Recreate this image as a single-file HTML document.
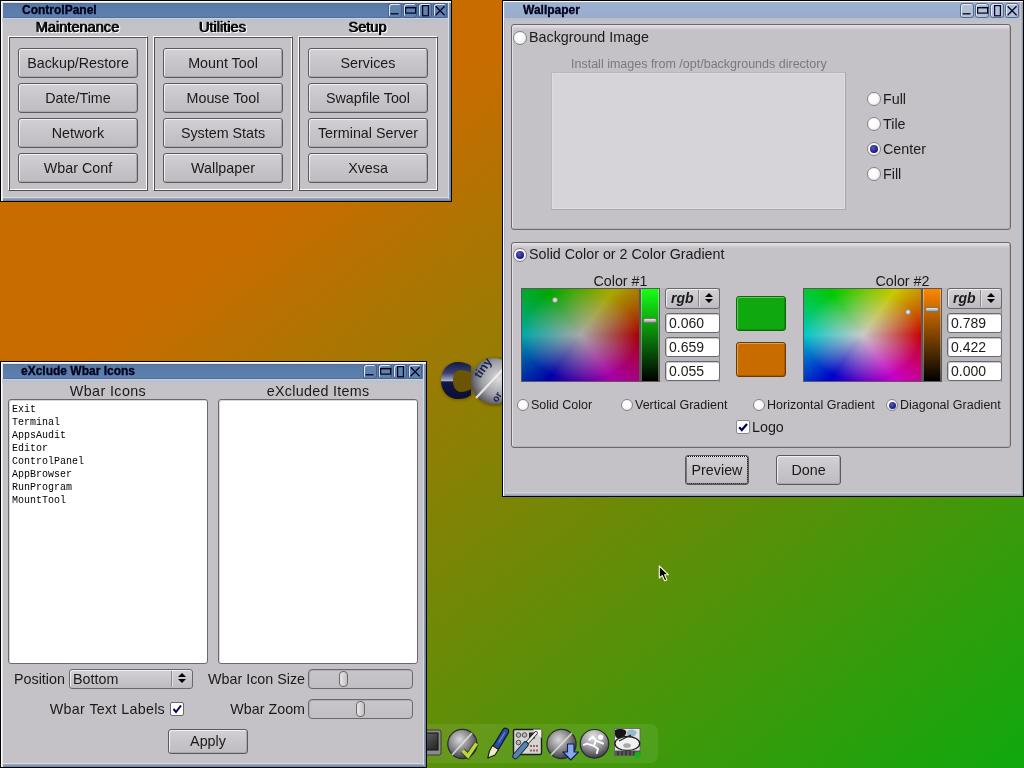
<!DOCTYPE html>
<html><head><meta charset="utf-8">
<style>
*{box-sizing:border-box}
html,body{margin:0;padding:0}
body{will-change:transform}
body{width:1024px;height:768px;overflow:hidden;position:relative;font-family:"Liberation Sans",sans-serif;font-size:14px;color:#1a1a1a;
background:linear-gradient(to bottom right,#c96c00 0%,#c96c00 27.27%,#0fa80e 100%);}
.a{position:absolute}
.win{position:absolute;background:#c4c2c6;border:1px solid #000;
box-shadow:inset 1px 1px 0 #fbfbfd,inset 2px 2px 0 #e2e4e8,inset -1px 0 0 #76869e,inset 0 -1px 0 #76869e,inset -2px 0 0 #8898b2,inset 0 -2px 0 #8898b2,inset -3px 0 0 #d2dae4,inset 0 -3px 0 #98a6bc,inset 0 -4px 0 #d2dae4;}
.win.in{box-shadow:inset 1px 1px 0 #fbfbfd,inset 2px 2px 0 #a8b4c8,inset -1px 0 0 #9a9ca8,inset 0 -1px 0 #9a9ca8,inset -2px 0 0 #aeb0bc,inset 0 -2px 0 #aeb0bc,inset -3px 0 0 #c4c8d4,inset 0 -3px 0 #bcbec8,inset 0 -4px 0 #cdd0da;}
.tb{position:absolute;height:15px;background:linear-gradient(#5878a2,#5a7eac 50%,#5b80b0);box-shadow:inset 0 1px 0 #587090,inset 0 -1px 0 #5a6c98,0 1px 0 #c4d0dc;
font-weight:bold;font-size:12px;color:#00001c;line-height:15px;white-space:nowrap}
.tb.in{background:linear-gradient(#9cb0d0,#9aaed0 60%,#9caccc);box-shadow:inset 0 -1px 0 #a0a8c4,0 1px 0 #b8c0cc}
.tb span{position:absolute;top:0;-webkit-text-stroke:.3px #00001c}
.tbb{position:absolute;width:14px;height:15px;border-radius:3px;background:#6082ae;border:1px solid #4a5e80;box-shadow:inset 1px 1px 0 #dde8f8}
.tbb svg{position:absolute;left:-1px;top:-1px}
.tbb.in{background:#b2c0d6;border-color:#56688a;box-shadow:inset 1px 1px 0 #e4ecf6}
.btn{position:absolute;border:1px solid #5a5a5c;border-radius:3px;background:linear-gradient(#d2d0d4 0,#c8c6ca 45%,#bebcc0 100%);
box-shadow:inset 1px 1px 0 #f0f0f2,inset -1px -1px 0 #aaa8ac;text-align:center;white-space:nowrap;font-size:14.3px}
.emb{position:absolute;border-top:1px solid #fff;border-left:1px solid #fff;border-right:1px solid #505050;border-bottom:1px solid #505050;
box-shadow:inset 1px 1px 0 #505050,inset -1px -1px 0 #fff}
.glbl{position:absolute;text-align:center;line-height:18px;height:18px;font-size:14.6px;color:#000;text-shadow:-1px 0 rgba(0,0,0,.9),-1px -1px rgba(0,0,0,.25),1px 1px #fff,1px 0 rgba(255,255,255,.6)}
.t{position:absolute;white-space:nowrap;line-height:1;font-size:14.3px}
.gfr{position:absolute;border:1px solid #6a686c;border-radius:3px;background:linear-gradient(#e8e4ea,#c4c2c6 5px);box-shadow:inset 1px 1px 0 #e2e0e4,inset -1px -1px 0 #b6b4b8}
.rad{position:absolute;border-radius:50%;border:1px solid #858387;background:radial-gradient(circle at 40% 40%,#fff 0,#fafafa 50%,#d8d8d8 100%)}
.dot{position:absolute;border-radius:50%;background:radial-gradient(circle at 40% 35%,#5858c0,#14147a 75%)}
.imgbox{position:absolute;background:#d6d4d8;border:1px solid #a8a6aa;border-top-color:#b8b6ba;border-left-color:#b8b6ba;box-shadow:inset 1px 1px 0 #dedce0,inset -1px -1px 0 #e0dee2}
.huebox{position:absolute;border:1px solid #5a585c;overflow:hidden}
.hueinner{position:absolute;left:0;top:0;width:92px;height:92px;transform-origin:0 0}
.huemark{position:absolute;width:6px;height:6px;margin:-3px 0 0 -3px;border-radius:50%;background:#ddd;border:1px solid #888}
.valbox{position:absolute;border:1px solid #5a585c;box-shadow:inset 1px 0 0 rgba(255,255,255,.35),inset -1px 0 0 rgba(255,255,255,.35)}
.valknob{position:absolute;left:2px;width:14px;height:5px;margin-top:-2px;border-radius:2px;background:linear-gradient(#e8e8e8,#a0a0a0);border:1px solid #777}
.cpanel{position:absolute;background:#b9b7bb;border-right:1px solid #8a888c}
.choice{position:absolute;border:1px solid #6a686c;border-radius:3px;background:linear-gradient(#d4d2d6,#bdbbbf);box-shadow:inset 1px 1px 0 #eee}
.rgb{position:absolute;left:5px;top:2px;font-weight:bold;font-style:italic;font-size:14px;line-height:1}
.csep{position:absolute;left:32px;top:1px;width:1px;height:17px;background:#8a888c;box-shadow:1px 0 0 #e0e0e0}
.arr{position:absolute;left:39px;top:4px;width:0;height:0;border-left:4px solid transparent;border-right:4px solid transparent;border-bottom:4px solid #000}
.arr:after{content:"";position:absolute;left:-4px;top:6px;border-left:4px solid transparent;border-right:4px solid transparent;border-top:4px solid #000}
.inp{position:absolute;background:#fff;border:1px solid #6a686c;border-radius:3px;box-shadow:inset 1px 1px 0 #ccc;font-size:14px;line-height:18px;padding-left:3px}
.sw{position:absolute;border:1px solid;border-radius:3px;box-shadow:inset 1px 1px 0 rgba(255,255,255,.35),inset -1px -1px 0 rgba(0,0,0,.15)}
.chk{position:absolute;background:#fff;border:1px solid #6a686c;border-radius:2px}
.pv{outline:1px dotted #000;outline-offset:-2px}
.lst{position:absolute;background:#fff;border:1px solid #6a686c;border-radius:3px;box-shadow:inset 1px 1px 0 #d8d8d8}
.mono{position:absolute;font-family:"Liberation Mono",monospace;font-size:11.6px;line-height:13px;white-space:nowrap;transform:scaleX(0.862);transform-origin:0 0;color:#000}
.sld{position:absolute;border:1px solid #6a686c;border-radius:4px;background:linear-gradient(#c8c6ca,#c0bec2);box-shadow:inset 1px 1px 0 #b0aeb2}
.knob{position:absolute;top:1px;width:9px;height:16px;border:1px solid #6a686c;border-radius:4px;background:linear-gradient(90deg,#e8e8e8,#c0c0c0);}
</style></head><body>
<svg class="a" style="left:436px;top:352px" width="70" height="60" viewBox="0 0 70 60">
<defs>
<radialGradient id="sph" cx="0.6" cy="0.45" r="0.62"><stop offset="0" stop-color="#dcdcde"/><stop offset="0.6" stop-color="#a0a0a6"/><stop offset="1" stop-color="#50505a"/></radialGradient>
<linearGradient id="cg" x1="0" y1="0" x2="0" y2="1"><stop offset="0" stop-color="#141a44"/><stop offset="0.3" stop-color="#3a4070"/><stop offset="0.5" stop-color="#a8acc4"/><stop offset="0.54" stop-color="#121846"/><stop offset="1" stop-color="#0a0e34"/></linearGradient>
<filter id="blr" x="-30%" y="-30%" width="160%" height="160%"><feGaussianBlur stdDeviation="1.5"/></filter>
</defs>
<g filter="url(#blr)" opacity="0.45"><path d="M36 15 C32 12 27 11 22 11 C12 11 5 19 5 29.5 C5 40 12 48 22 48 C27 48 31 47 36 44 Z" fill="#3a2800"/><circle cx="59" cy="30" r="24" fill="#3a2800"/></g>
<path d="M35 14 C31 11 27 10 22 10 C12 10 5 18 5 28.5 C5 39 12 47 22 47 C27 47 31 46 35 43 L35 37 C32 39 28 40 25 40 C20 40 17 35 17 28.5 C17 22 20 18 25 18 C28 18 32 19 35 21 Z" fill="url(#cg)"/>
<circle cx="58" cy="29" r="23" fill="url(#sph)"/>
<path d="M40 46 L70 14" stroke="#f4f4f4" stroke-width="2.2" opacity="0.85"/>
<text x="0" y="0" font-family="Liberation Sans" font-weight="bold" font-size="12" fill="#1a2050" transform="translate(44 27) rotate(-55)">tiny</text>
<text x="0" y="0" font-family="Liberation Sans" font-weight="bold" font-size="10" fill="#1a2050" transform="translate(61 51) rotate(-58)">or</text>
</svg>
<div class="a" style="left:405px;top:724px;width:253px;height:39px;border-radius:7px;background:rgba(255,255,255,0.08)"></div>
<svg class="a" style="left:405px;top:724px" width="253" height="40" viewBox="0 0 253 40">
<defs>
<radialGradient id="ball" cx="0.4" cy="0.35" r="0.7"><stop offset="0" stop-color="#d8d8d8"/><stop offset="0.5" stop-color="#8a8a8e"/><stop offset="1" stop-color="#34343a"/></radialGradient>
<radialGradient id="ball2" cx="0.45" cy="0.25" r="0.75"><stop offset="0" stop-color="#e4e4e4"/><stop offset="0.55" stop-color="#9a9aa0"/><stop offset="1" stop-color="#3a3a40"/></radialGradient>
<linearGradient id="scr" x1="0" y1="0" x2="1" y2="1"><stop offset="0" stop-color="#707070"/><stop offset="1" stop-color="#202020"/></linearGradient>
</defs>
<rect x="9" y="6" width="27" height="25" rx="2" fill="#8a8a8a" stroke="#3a3a3a"/>
<rect x="12" y="9" width="21" height="17" fill="url(#scr)" stroke="#111"/>
<circle cx="57.4" cy="20" r="14.6" fill="url(#ball)" stroke="#2c2c30" stroke-width="1.2"/>
<path d="M47 31 L67 9" stroke="#e8e8e8" stroke-width="1.8" opacity="0.8"/>
<path d="M57.5 26.5 L63 32 L71.5 19.5" stroke="#203000" stroke-width="5.5" fill="none" stroke-linejoin="miter" opacity="0.6"/>
<path d="M57.5 26.5 L63 32 L71.5 19.5" stroke="#b8d838" stroke-width="3.6" fill="none" stroke-linejoin="miter"/>
<path d="M100.5 7.5 L90.5 24" stroke="#0c1830" stroke-width="7.4" stroke-linecap="round"/>
<path d="M100.5 7.5 L90.5 24" stroke="#2e4ea6" stroke-width="5" stroke-linecap="round"/>
<path d="M99.5 9 L94 18" stroke="#6a8ad8" stroke-width="1.2" stroke-linecap="round"/>
<path d="M87.5 21.5 L93.5 25.5 L90 31 L82.8 34 L84.5 27 Z" fill="#eeecc8" stroke="#1c1c10" stroke-width="1.1" stroke-linejoin="round"/>
<rect x="108.5" y="5.5" width="28" height="25" rx="1.5" fill="#d4d4d2" stroke="#1e1e1e" stroke-width="1.4"/>
<path d="M128 5.5 L136.5 5.5 L136.5 14 Z" fill="#f4f4f4"/>
<circle cx="113.5" cy="11" r="2.3" fill="#b8b8b8" stroke="#505050"/><circle cx="119.5" cy="11" r="2.3" fill="#b8b8b8" stroke="#505050"/><circle cx="113.5" cy="18.5" r="2.3" fill="#b8b8b8" stroke="#505050"/>
<rect x="124" y="8.5" width="6" height="6" fill="#2a2a2a"/>
<path d="M126 21 v2 M129 21 v2 M132 21 v2 M126 25.5 v2 M129 25.5 v2 M132 25.5 v2" stroke="#8a4a40" stroke-width="1.6"/>
<path d="M131 9 L121 20" stroke="#202020" stroke-width="3.6" stroke-linecap="round"/>
<path d="M131 9 L121 20" stroke="#f2f2f2" stroke-width="2.2" stroke-linecap="round"/>
<path d="M120.5 20.5 L110.5 32" stroke="#1a2838" stroke-width="6.4" stroke-linecap="round"/>
<path d="M120.5 20.5 L110.5 32" stroke="#5a82b0" stroke-width="4.4" stroke-linecap="round"/>
<circle cx="156.5" cy="20" r="14.6" fill="url(#ball)" stroke="#2c2c30" stroke-width="1.2"/>
<path d="M146 31 L167 9" stroke="#e8e8e8" stroke-width="1.8" opacity="0.8"/>
<path d="M162.5 20 h6.5 v8 h4.5 l-7.75 8 l-7.75 -8 h4.5 z" fill="#88a8f0" stroke="#101c50" stroke-width="1.1" stroke-linejoin="round"/>
<circle cx="189.5" cy="19.8" r="14.3" fill="url(#ball2)" stroke="#2a2a2e" stroke-width="1.2"/>
<circle cx="195.7" cy="13.2" r="2.6" fill="#fff"/>
<path d="M184.4 15.7 L187.7 12.8 L191 16.5 L188.9 21.8 L181.8 19.6 L178.8 20.8 M191 16.5 L194.7 18.2 L198.2 19.6 M188.9 21.8 L193 25 L191.8 29.2" stroke="#fff" stroke-width="1.9" fill="none" stroke-linecap="round" stroke-linejoin="round"/>
<rect x="209.6" y="4.4" width="25.4" height="27" fill="#e4e4e4" stroke="#606060" stroke-width="0.8"/>
<path d="M210 6 C213 4.5 219 4.5 221 7 C222 10 219 14 214 14.5 C211 14.5 210 12 210 10 Z" fill="#151515"/>
<ellipse cx="226.5" cy="9" rx="5" ry="3.4" fill="#9ab8cc"/>
<ellipse cx="222.3" cy="19.5" rx="12.4" ry="7" fill="#f0f0f0" stroke="#1a1a1a" stroke-width="1.3"/>
<path d="M214 17 L226 11" stroke="#202020" stroke-width="1.2"/>
<ellipse cx="222" cy="21.5" rx="3.8" ry="2.3" fill="#a8a8a8"/>
<rect x="209.6" y="26.5" width="25.4" height="5" fill="#585858"/>
<path d="M213 27 v4.5 M217 27 v4.5 M221 27 v4.5 M225 27 v4.5 M229 27 v4.5" stroke="#2a2a2a" stroke-width="1.2"/>
<circle cx="232.5" cy="31" r="3.2" fill="#18b018"/>
</svg>
<div class="win" style="left:0px;top:0px;width:452px;height:202px"></div>
<div class="a" style="left:2px;top:18px;width:446px;height:6px;background:linear-gradient(rgba(176,192,214,.75),rgba(196,194,198,0))"></div>
<div class="tb" style="left:3px;top:3px;width:445px"><span style="left:19px">ControlPanel</span></div>
<div class="tbb" style="left:388px;top:3px"><svg width="15" height="16" viewBox="0 0 15 16"><g stroke="#000024" fill="none"><path d="M2.5 10.8 H10.5" stroke-width="1.3"/></g></svg></div>
<div class="tbb" style="left:403px;top:3px"><svg width="15" height="16" viewBox="0 0 15 16"><g stroke="#000024" fill="none"><rect x="2.6" y="4.6" width="10" height="5.5" stroke-width="1.2"/><path d="M2 4.6 H13.2" stroke-width="1.3"/></g></svg></div>
<div class="tbb" style="left:418px;top:3px"><svg width="15" height="16" viewBox="0 0 15 16"><g stroke="#000024" fill="none"><rect x="4.6" y="2.6" width="5.8" height="10.2" stroke-width="1.2"/></g></svg></div>
<div class="tbb" style="left:433px;top:3px"><svg width="15" height="16" viewBox="0 0 15 16"><g stroke="#000024" fill="none"><path d="M2.6 3.2 L11.6 12.2 M11.6 3.2 L2.6 12.2" stroke-width="1.25"/></g></svg></div>
<div class="glbl" style="left:8px;top:18px;width:140px">Maintenance</div>
<div class="glbl" style="left:153px;top:18px;width:140px">Utilities</div>
<div class="glbl" style="left:298px;top:18px;width:140px">Setup</div>
<div class="emb" style="left:8px;top:36px;width:140px;height:155px"></div>
<div class="emb" style="left:153px;top:36px;width:140px;height:155px"></div>
<div class="emb" style="left:298px;top:36px;width:140px;height:155px"></div>
<div class="btn" style="left:18px;top:48px;width:120px;height:30px;line-height:28px">Backup/Restore</div>
<div class="btn" style="left:18px;top:83px;width:120px;height:30px;line-height:28px">Date/Time</div>
<div class="btn" style="left:18px;top:118px;width:120px;height:30px;line-height:28px">Network</div>
<div class="btn" style="left:18px;top:153px;width:120px;height:30px;line-height:28px">Wbar Conf</div>
<div class="btn" style="left:163px;top:48px;width:120px;height:30px;line-height:28px">Mount Tool</div>
<div class="btn" style="left:163px;top:83px;width:120px;height:30px;line-height:28px">Mouse Tool</div>
<div class="btn" style="left:163px;top:118px;width:120px;height:30px;line-height:28px">System Stats</div>
<div class="btn" style="left:163px;top:153px;width:120px;height:30px;line-height:28px">Wallpaper</div>
<div class="btn" style="left:308px;top:48px;width:120px;height:30px;line-height:28px">Services</div>
<div class="btn" style="left:308px;top:83px;width:120px;height:30px;line-height:28px">Swapfile Tool</div>
<div class="btn" style="left:308px;top:118px;width:120px;height:30px;line-height:28px">Terminal Server</div>
<div class="btn" style="left:308px;top:153px;width:120px;height:30px;line-height:28px">Xvesa</div>
<div class="win in" style="left:502px;top:0px;width:522px;height:497px"></div>
<div class="a" style="left:504px;top:18px;width:516px;height:6px;background:linear-gradient(rgba(176,192,214,.75),rgba(196,194,198,0))"></div>
<div class="tb in" style="left:505px;top:3px;width:515px"><span style="left:18px">Wallpaper</span></div>
<div class="tbb in" style="left:960px;top:3px"><svg width="15" height="16" viewBox="0 0 15 16"><g stroke="#000024" fill="none"><path d="M2.5 10.8 H10.5" stroke-width="1.3"/></g></svg></div>
<div class="tbb in" style="left:975px;top:3px"><svg width="15" height="16" viewBox="0 0 15 16"><g stroke="#000024" fill="none"><rect x="2.6" y="4.6" width="10" height="5.5" stroke-width="1.2"/><path d="M2 4.6 H13.2" stroke-width="1.3"/></g></svg></div>
<div class="tbb in" style="left:990px;top:3px"><svg width="15" height="16" viewBox="0 0 15 16"><g stroke="#000024" fill="none"><rect x="4.6" y="2.6" width="5.8" height="10.2" stroke-width="1.2"/></g></svg></div>
<div class="tbb in" style="left:1005px;top:3px"><svg width="15" height="16" viewBox="0 0 15 16"><g stroke="#000024" fill="none"><path d="M2.6 3.2 L11.6 12.2 M11.6 3.2 L2.6 12.2" stroke-width="1.25"/></g></svg></div>
<div class="gfr" style="left:511px;top:24px;width:500px;height:206px"></div>
<div class="gfr" style="left:511px;top:242px;width:500px;height:206px"></div>
<div class="rad" style="left:513px;top:31px;width:14px;height:14px"></div>
<div class="t" style="left:529px;top:30px;font-size:14.3px;">Background Image</div>
<div class="t" style="left:571px;top:58px;font-size:12.5px;color:#7a787c;">Install images from /opt/backgrounds directory</div>
<div class="imgbox" style="left:551px;top:72px;width:295px;height:138px"></div>
<div class="rad" style="left:867px;top:92px;width:14px;height:14px"></div>
<div class="t" style="left:883px;top:92px;font-size:14.3px;">Full</div>
<div class="rad" style="left:867px;top:117px;width:14px;height:14px"></div>
<div class="t" style="left:883px;top:117px;font-size:14.3px;">Tile</div>
<div class="rad" style="left:867px;top:142px;width:14px;height:14px"><div class="dot" style="left:2.0px;top:2.0px;width:8px;height:8px"></div></div>
<div class="t" style="left:883px;top:142px;font-size:14.3px;">Center</div>
<div class="rad" style="left:867px;top:167px;width:14px;height:14px"></div>
<div class="t" style="left:883px;top:167px;font-size:14.3px;">Fill</div>
<div class="rad" style="left:513px;top:248px;width:14px;height:14px"><div class="dot" style="left:2.0px;top:2.0px;width:8px;height:8px"></div></div>
<div class="t" style="left:529px;top:247px;font-size:14.3px;">Solid Color or 2 Color Gradient</div>
<div class="t" style="left:521px;top:274px;width:199px;text-align:center">Color #1</div>
<div class="huebox" style="left:521px;top:288px;width:119px;height:94px"><div class="hueinner" style="background:radial-gradient(closest-side,rgba(168,168,168,1),rgba(168,168,168,0)),conic-gradient(rgb(84,168,0) 0deg,rgb(168,168,0) 30deg,rgb(168,0,0) 90deg,rgb(168,0,168) 150deg,rgb(0,0,168) 210deg,rgb(0,168,168) 270deg,rgb(0,168,0) 330deg,rgb(84,168,0) 360deg);transform:scale(1.2717391304347827,1)"></div><div class="huemark" style="left:33px;top:11px"></div></div>
<div class="valbox" style="left:640px;top:288px;width:20px;height:94px;background:linear-gradient(rgb(23,255,21),#000)"><div class="valknob" style="top:31px"></div></div>
<div class="cpanel" style="left:660px;top:288px;width:60px;height:94px"></div>
<div class="choice" style="left:665px;top:288px;width:55px;height:21px"><span class="rgb">rgb</span><div class="csep"></div><div class="arr"></div></div>
<div class="inp" style="left:665px;top:313px;width:55px;height:20px">0.060</div>
<div class="inp" style="left:665px;top:337px;width:55px;height:20px">0.659</div>
<div class="inp" style="left:665px;top:361px;width:55px;height:20px">0.055</div>
<div class="sw" style="left:736px;top:296px;width:50px;height:35px;background:#0fa80e;border-color:#0a6a0a"></div>
<div class="sw" style="left:736px;top:342px;width:50px;height:35px;background:#c96c00;border-color:#6a3a00"></div>
<div class="t" style="left:803px;top:274px;width:199px;text-align:center">Color #2</div>
<div class="huebox" style="left:803px;top:288px;width:119px;height:94px"><div class="hueinner" style="background:radial-gradient(closest-side,rgba(201,201,201,1),rgba(201,201,201,0)),conic-gradient(rgb(101,201,0) 0deg,rgb(201,201,0) 30deg,rgb(201,0,0) 90deg,rgb(201,0,201) 150deg,rgb(0,0,201) 210deg,rgb(0,201,201) 270deg,rgb(0,201,0) 330deg,rgb(101,201,0) 360deg);transform:scale(1.2717391304347827,1)"></div><div class="huemark" style="left:104px;top:23px"></div></div>
<div class="valbox" style="left:922px;top:288px;width:20px;height:94px;background:linear-gradient(rgb(255,136,0),#000)"><div class="valknob" style="top:20px"></div></div>
<div class="cpanel" style="left:942px;top:288px;width:60px;height:94px"></div>
<div class="choice" style="left:947px;top:288px;width:55px;height:21px"><span class="rgb">rgb</span><div class="csep"></div><div class="arr"></div></div>
<div class="inp" style="left:947px;top:313px;width:55px;height:20px">0.789</div>
<div class="inp" style="left:947px;top:337px;width:55px;height:20px">0.422</div>
<div class="inp" style="left:947px;top:361px;width:55px;height:20px">0.000</div>
<div class="rad" style="left:517px;top:399px;width:12px;height:12px"></div>
<div class="t" style="left:531px;top:399px;font-size:12.5px;">Solid Color</div>
<div class="rad" style="left:621px;top:399px;width:12px;height:12px"></div>
<div class="t" style="left:635px;top:399px;font-size:12.5px;">Vertical Gradient</div>
<div class="rad" style="left:753px;top:399px;width:12px;height:12px"></div>
<div class="t" style="left:767px;top:399px;font-size:12.5px;">Horizontal Gradient</div>
<div class="rad" style="left:886px;top:399px;width:12px;height:12px"><div class="dot" style="left:1.5px;top:1.5px;width:7px;height:7px"></div></div>
<div class="t" style="left:900px;top:399px;font-size:12.5px;">Diagonal Gradient</div>
<div class="chk" style="left:736px;top:420px;width:14px;height:14px;border-color:#8a888c"><svg width="12" height="12" viewBox="0 0 12 12" style="position:absolute;left:0;top:0"><path d="M2.2 6.2 L4.8 9 L10 3" stroke="#000058" stroke-width="2.2" fill="none"/></svg></div>
<div class="t" style="left:752px;top:420px;font-size:14.3px;">Logo</div>
<div class="btn pv" style="left:685px;top:455px;width:64px;height:30px;line-height:28px">Preview</div>
<div class="btn" style="left:776px;top:455px;width:65px;height:30px;line-height:28px">Done</div>
<div class="win" style="left:0px;top:361px;width:427px;height:407px"></div>
<div class="a" style="left:2px;top:379px;width:421px;height:6px;background:linear-gradient(rgba(176,192,214,.75),rgba(196,194,198,0))"></div>
<div class="tb" style="left:3px;top:364px;width:420px"><span style="left:18px">eXclude Wbar Icons</span></div>
<div class="tbb" style="left:363px;top:364px"><svg width="15" height="16" viewBox="0 0 15 16"><g stroke="#000024" fill="none"><path d="M2.5 10.8 H10.5" stroke-width="1.3"/></g></svg></div>
<div class="tbb" style="left:378px;top:364px"><svg width="15" height="16" viewBox="0 0 15 16"><g stroke="#000024" fill="none"><rect x="2.6" y="4.6" width="10" height="5.5" stroke-width="1.2"/><path d="M2 4.6 H13.2" stroke-width="1.3"/></g></svg></div>
<div class="tbb" style="left:393px;top:364px"><svg width="15" height="16" viewBox="0 0 15 16"><g stroke="#000024" fill="none"><rect x="4.6" y="2.6" width="5.8" height="10.2" stroke-width="1.2"/></g></svg></div>
<div class="tbb" style="left:408px;top:364px"><svg width="15" height="16" viewBox="0 0 15 16"><g stroke="#000024" fill="none"><path d="M2.6 3.2 L11.6 12.2 M11.6 3.2 L2.6 12.2" stroke-width="1.25"/></g></svg></div>
<div class="t" style="left:8px;top:384px;width:200px;text-align:center;letter-spacing:.4px">Wbar Icons</div>
<div class="t" style="left:218px;top:384px;width:200px;text-align:center;letter-spacing:.3px">eXcluded Items</div>
<div class="lst" style="left:8px;top:399px;width:200px;height:265px"></div>
<div class="lst" style="left:218px;top:399px;width:200px;height:265px"></div>
<div class="mono" style="left:12px;top:402px">Exit</div>
<div class="mono" style="left:12px;top:415px">Terminal</div>
<div class="mono" style="left:12px;top:428px">AppsAudit</div>
<div class="mono" style="left:12px;top:441px">Editor</div>
<div class="mono" style="left:12px;top:454px">ControlPanel</div>
<div class="mono" style="left:12px;top:467px">AppBrowser</div>
<div class="mono" style="left:12px;top:480px">RunProgram</div>
<div class="mono" style="left:12px;top:493px">MountTool</div>
<div class="t" style="left:14px;top:672px;font-size:14.3px;">Position</div>
<div class="choice" style="left:69px;top:669px;width:124px;height:20px"><span class="a" style="left:3px;top:1px;font-size:14.3px;line-height:16px">Bottom</span><div class="csep" style="left:101px;height:16px"></div><div class="arr" style="left:108px;top:3px"></div></div>
<div class="t" style="left:150px;top:672px;width:155px;text-align:right">Wbar Icon Size</div>
<div class="sld" style="left:308px;top:669px;width:105px;height:20px"><div class="knob" style="left:30px"></div></div>
<div class="t" style="left:10px;top:702px;width:155px;text-align:right;word-spacing:.5px;letter-spacing:.25px">Wbar Text Labels</div>
<div class="chk" style="left:170px;top:702px;width:14px;height:14px"><svg width="12" height="12" viewBox="0 0 12 12" style="position:absolute;left:0;top:0"><path d="M2.5 6 L5 9 L10 2.5" stroke="#000060" stroke-width="2" fill="none"/></svg></div>
<div class="t" style="left:150px;top:702px;width:155px;text-align:right">Wbar Zoom</div>
<div class="sld" style="left:308px;top:699px;width:105px;height:20px"><div class="knob" style="left:47px"></div></div>
<div class="btn" style="left:168px;top:729px;width:80px;height:25px;line-height:22px">Apply</div>
<svg class="a" style="left:657px;top:563px" width="16" height="22" viewBox="0 0 16 22">
<path d="M2.3 3 L2.3 15 L5.2 12.6 L7.6 17.8 L9.8 16.9 L7.6 11.8 L11.3 11.6 Z" fill="#000" stroke="#f8ffe0" stroke-width="1.1" stroke-linejoin="round"/>
</svg>
</body></html>
